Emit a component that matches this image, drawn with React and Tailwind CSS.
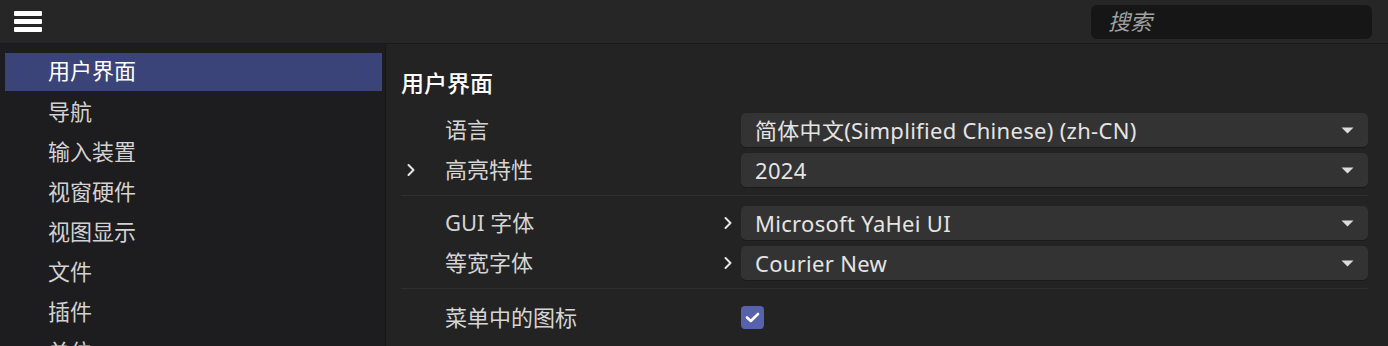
import React from "react";

const FONT = { fontFamily: '"Noto Sans", "Noto Sans CJK SC", sans-serif' };

function Chevron({ className = "" }) {
  return (
    <svg width="10" height="14" viewBox="0 0 10 14" className={className}>
      <path d="M2.5 2 L7.5 7 L2.5 12" fill="none" stroke="#e6e6e6" strokeWidth="2" strokeLinecap="round" strokeLinejoin="round" />
    </svg>
  );
}

function Dropdown({ value }) {
  return (
    <div className="flex-1 h-[34px] rounded-[5px] bg-[#333333] flex items-center pl-[14px] pr-[14px] shadow-[0_1px_0_#1a1a1a]">
      <span className="flex-1 text-[22px] tracking-[0.3px] text-[#e4e4e4] leading-none">{value}</span>
      <svg width="13" height="7" viewBox="0 0 13 7">
        <path d="M0.5 0.5 L12.5 0.5 L6.5 6.5 Z" fill="#dcdcdc" />
      </svg>
    </div>
  );
}

function Row({ leftChevron, label, midChevron, children }) {
  return (
    <div className="flex items-center h-[34px]">
      <div className="w-[44px] flex items-center pl-[5px]">{leftChevron ? <Chevron /> : null}</div>
      <div className="w-[296px] flex items-center text-[22px] text-[#d4d4d4] pb-[1px]">
        <span className="flex-1">{label}</span>
        {midChevron ? <Chevron className="mr-[8px]" /> : null}
      </div>
      {children}
    </div>
  );
}

export default function App() {
  const items = ["导航", "输入装置", "视窗硬件", "视图显示", "文件", "插件", "单位"];
  return (
    <div className="w-[1388px] h-[346px] overflow-hidden bg-[#232323] flex flex-col" style={FONT}>
      {/* top bar */}
      <div className="h-[44px] shrink-0 bg-[#262626] border-b border-[#191919] flex items-center justify-between pl-[14px] pr-[16px]">
        <div className="flex flex-col gap-[3px] w-[28px]">
          <div className="h-[5px] rounded-[1px] bg-white" />
          <div className="h-[5px] rounded-[1px] bg-white" />
          <div className="h-[5px] rounded-[1px] bg-white" />
        </div>
        <div className="w-[281px] h-[34px] rounded-[6px] bg-[#161616] flex items-center pl-[17px]">
          <span className="text-[22px] italic text-[#a0a0a0]">搜索</span>
        </div>
      </div>
      {/* body */}
      <div className="flex flex-1 min-h-0">
        <div className="w-[386px] shrink-0 bg-[#1d1c1e] border-r border-[#161616] pt-[9px] pl-[5px] pr-[3px]">
          <div className="h-[38px] mb-[2px] bg-[#3b4479] flex items-center pl-[43px] pb-[3px] text-[22px] text-white">用户界面</div>
          {items.map((t) => (
            <div key={t} className="h-[40px] flex items-center pl-[43px] pb-[4px] text-[22px] text-[#d2d2d2]">{t}</div>
          ))}
        </div>
        <div className="flex-1 bg-[#232323] pl-[15px] pr-[20px] pt-[25px] flex flex-col">
          <div className="text-[23px] leading-[28px] text-white font-medium">用户界面</div>
          <div className="mt-[16px] flex flex-col gap-[6px]">
            <Row label="语言"><Dropdown value="简体中文(Simplified Chinese) (zh-CN)" /></Row>
            <Row leftChevron label="高亮特性"><Dropdown value="2024" /></Row>
          </div>
          <div className="mt-[8px] h-[1px] bg-[#2f2f2f]" />
          <div className="mt-[10px] flex flex-col gap-[6px]">
            <Row label="GUI 字体" midChevron><Dropdown value="Microsoft YaHei UI" /></Row>
            <Row label="等宽字体" midChevron><Dropdown value="Courier New" /></Row>
          </div>
          <div className="mt-[8px] h-[1px] bg-[#2f2f2f]" />
          <div className="mt-[16px] flex items-center h-[24px]">
            <div className="w-[44px]" />
            <div className="w-[296px] text-[22px] text-[#d4d4d4]">菜单中的图标</div>
            <div className="w-[23px] h-[23px] rounded-[4px] bg-[#5662ad] flex items-center justify-center">
              <svg width="15" height="11" viewBox="0 0 15 11">
                <path d="M2 5.5 L5.8 9 L13 2" fill="none" stroke="white" strokeWidth="2.6" strokeLinecap="round" strokeLinejoin="round" />
              </svg>
            </div>
          </div>
        </div>
      </div>
    </div>
  );
}
